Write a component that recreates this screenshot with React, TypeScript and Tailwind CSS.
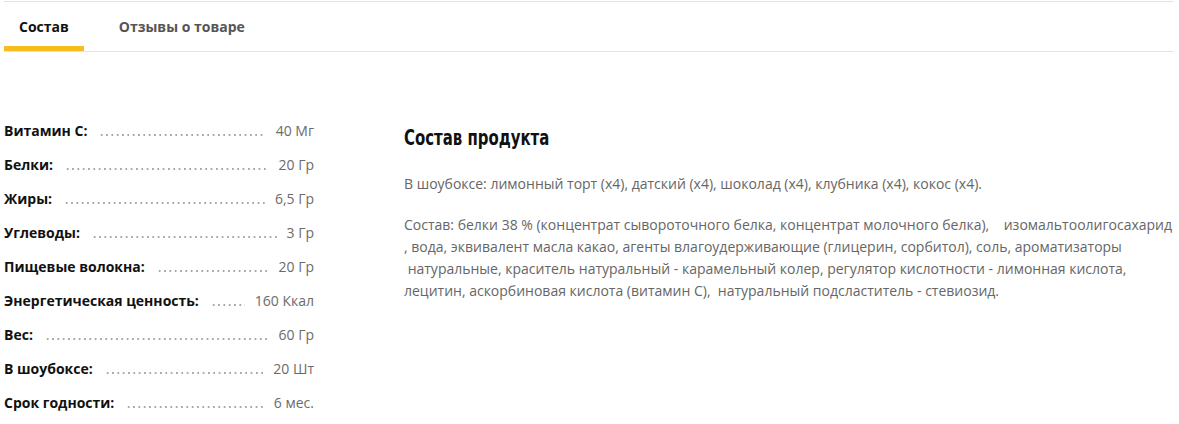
import React from 'react';

const specs = [
  { label: 'Витамин С:', value: '40 Мг' },
  { label: 'Белки:', value: '20 Гр' },
  { label: 'Жиры:', value: '6,5 Гр' },
  { label: 'Углеводы:', value: '3 Гр' },
  { label: 'Пищевые волокна:', value: '20 Гр' },
  { label: 'Энергетическая ценность:', value: '160 Ккал' },
  { label: 'Вес:', value: '60 Гр' },
  { label: 'В шоубоксе:', value: '20 Шт' },
  { label: 'Срок годности:', value: '6 мес.' },
];

export default function App() {
  return (
    <div className="w-[1179px] h-[424px] bg-white font-['Open_Sans',sans-serif] overflow-hidden">
      {/* Tabs */}
      <div className="ml-[4px] mt-[1px] w-[1170px] border-t border-b border-[#e3e3e3]">
        <div className="flex h-[49px] text-[14px] font-bold">
          <div className="flex items-center px-[15px] h-full border-b-[5px] border-[#f6bd1c] text-[#111] pt-[5px]">
            Состав
          </div>
          <div className="flex items-center ml-[20px] px-[15px] h-full text-[#555]">
            Отзывы о товаре
          </div>
        </div>
      </div>

      <div className="flex pl-[4px] pt-[61px]">
        {/* Specs */}
        <div className="w-[310px] shrink-0">
          {specs.map((row, i) => (
            <div key={i} className="flex items-center h-[34px] text-[14px]">
              <span className="font-bold text-[#111] shrink-0">{row.label}</span>
              <div className="flex-1 ml-[12px] mr-[10px] mt-[9px] h-[2px] bg-[radial-gradient(circle,#a8a8a8_0.9px,transparent_1.1px)] bg-[length:5.33px_2px] bg-repeat-x" />
              <span className="text-[#6b6b6b] shrink-0">{row.value}</span>
            </div>
          ))}
        </div>

        {/* Description */}
        <div className="ml-[90px] flex-1 pt-[13px]">
          <h3 className="font-['DejaVu_Sans_Condensed',sans-serif] font-bold text-[21px] leading-[24px] text-[#111] origin-left scale-x-[0.79] whitespace-nowrap">
            Состав продукта
          </h3>
          <div className="mt-[23px] text-[14px] leading-[22px] text-[#666]">
            <p>В шоубоксе: лимонный торт (х4), датский (х4), шоколад (х4), клубника (х4), кокос (х4).</p>
            <p className="mt-[19px]">
              Состав: белки 38 % (концентрат сывороточного белка, концентрат молочного белка),&nbsp;&nbsp;&nbsp; изомальтоолигосахарид
              <br />
              , вода, эквивалент масла какао, агенты влагоудерживающие (глицерин, сорбитол), соль, ароматизаторы
              <br />
              &nbsp;натуральные, краситель натуральный - карамельный колер, регулятор кислотности - лимонная кислота,
              <br />
              лецитин, аскорбиновая кислота (витамин С),&nbsp; натуральный подсластитель - стевиозид.
            </p>
          </div>
        </div>
      </div>
    </div>
  );
}
